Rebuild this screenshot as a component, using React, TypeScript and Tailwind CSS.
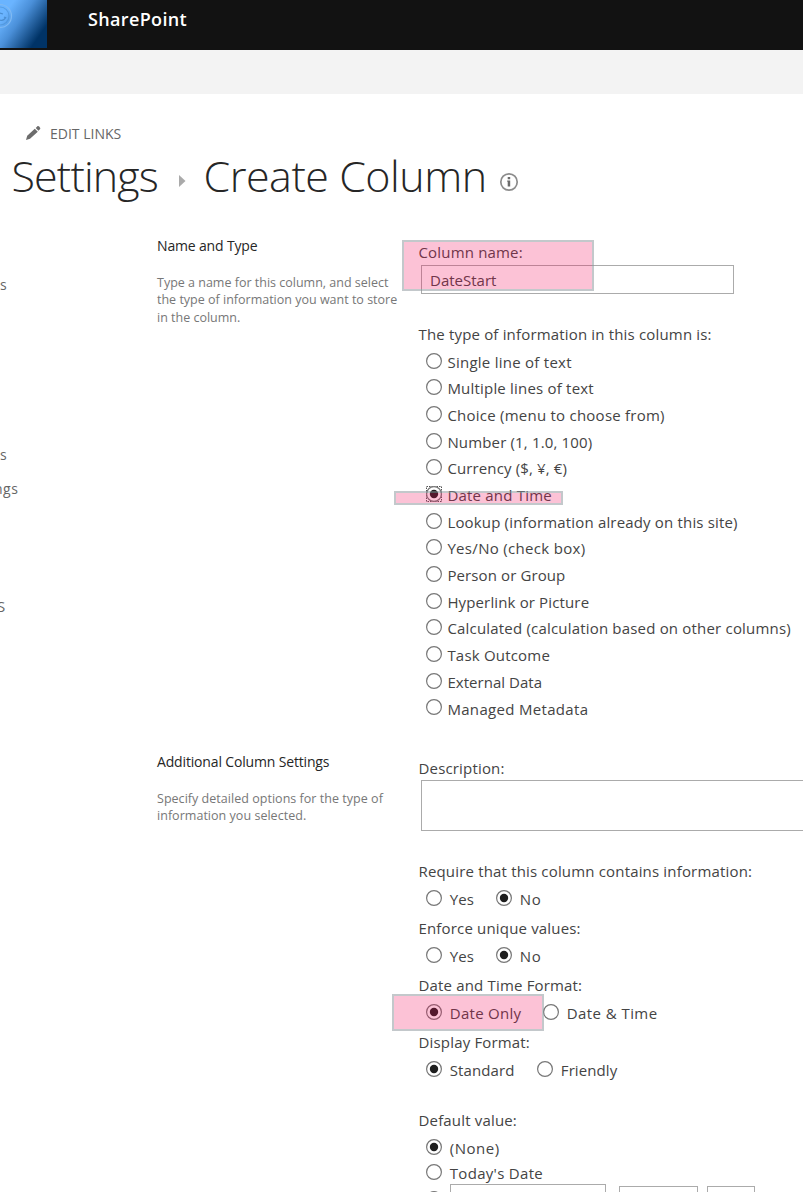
import React from "react";

function Radio({ checked = false, focused = false }: { checked?: boolean; focused?: boolean }) {
  return (
    <svg width="18" height="18" viewBox="0 0 18 18" className="shrink-0">
      {focused ? (
        <rect x="1.5" y="1.5" width="15" height="15" fill="none" stroke="#555" strokeDasharray="1.5 1" />
      ) : null}
      <circle cx="9" cy="9" r="7.4" fill="#fff" stroke="#777" strokeWidth="1.2" />
      {checked ? <circle cx="9" cy="9" r="4.2" fill="#1e1e1e" /> : null}
    </svg>
  );
}

const types = [
  { label: "Single line of text", cls: "tracking-[0.26px]" },
  { label: "Multiple lines of text", cls: "tracking-[0.2px]" },
  { label: "Choice (menu to choose from)", cls: "tracking-[0.24px]" },
  { label: "Number (1, 1.0, 100)", cls: "tracking-[0.16px]" },
  { label: "Currency ($, ¥, €)", cls: "tracking-[0.13px]" },
  { label: "Date and Time", cls: "tracking-[0.2px]" },
  { label: "Lookup (information already on this site)", cls: "tracking-[0.17px]" },
  { label: "Yes/No (check box)", cls: "tracking-[0.32px]" },
  { label: "Person or Group", cls: "tracking-[0.11px]" },
  { label: "Hyperlink or Picture", cls: "tracking-[0.14px]" },
  { label: "Calculated (calculation based on other columns)", cls: "tracking-[0.19px]" },
  { label: "Task Outcome", cls: "tracking-[0.2px]" },
  { label: "External Data", cls: "tracking-[0.04px]" },
  { label: "Managed Metadata", cls: "tracking-[0.32px]" },
];

function Label({ children, className = "" }: { children: React.ReactNode; className?: string }) {
  return <div className={`h-6 pl-[0.5px] leading-[22px] tracking-[0.17px] ${className}`}>{children}</div>;
}

function Choice({
  label,
  checked,
  className = "",
  text = "tracking-[0.1px]",
}: {
  label: string;
  checked?: boolean;
  className?: string;
  text?: string;
}) {
  return (
    <div className={`flex h-7 shrink-0 items-center ${className}`}>
      <Radio checked={checked} />
      <span className={`relative top-px ml-[6.8px] ${text}`}>{label}</span>
    </div>
  );
}

export default function App() {
  return (
    <div className="relative h-[1192px] w-[803px] overflow-hidden bg-white font-['Open_Sans','Noto_Sans',sans-serif] text-[15px] whitespace-nowrap text-[#444]">
      <header className="flex h-[50px] bg-[#121212]">
        <div className="h-12 w-[47px] overflow-hidden bg-[linear-gradient(125deg,#6ab4ff_18%,#4a8fd8_42%,#003366_80%)]">
          <svg width="47" height="48" fill="none" stroke="#4a8dd0" strokeWidth="1.2">
            <circle cx="0" cy="16" r="11.5" stroke="#7fb9f2" />
            <circle cx="0" cy="16" r="9" opacity="0.6" />
            <path d="M0 13l3 1M4 17l2 1M0 20c3 1 5-1 6-3" />
          </svg>
        </div>
        <div className="ml-[41px] h-10 text-[18px] leading-[38px] font-semibold tracking-[0.35px] text-white">SharePoint</div>
      </header>
      <div className="h-11 bg-[#f3f3f3]" />

      <div className="flex h-[58px] items-center pt-[21px] pl-[25px] text-[14px] text-[#666]">
        <svg width="16" height="16" viewBox="0 0 16 16" fill="#6c6c6c" className="-mt-0.5">
          <path d="M1 15l1.2-4.2 7.6-7.1 3 3L5 13.8zM10.7 2.9l1.5-1.4c.6-.6 1.4-.5 2 .1l.7.8c.6.6.5 1.3 0 1.9l-1.4 1.4z" />
        </svg>
        <span className="ml-[9px]">EDIT LINKS</span>
      </div>
      <h1 className="flex h-[78px] items-start pl-[11.5px] text-[43px] leading-[48px] font-light text-[#262626]">
        <span className="tracking-[-0.85px]">Settings</span>
        <svg width="8" height="14" viewBox="0 0 8 14" className="mt-[22px] ml-5">
          <path d="M1 1l6.5 6L1 13z" fill="#aaa" />
        </svg>
        <span className="ml-[17.5px] tracking-[-0.48px]">Create Column</span>
        <svg width="20" height="20" viewBox="0 0 20 20" className="mt-[19.5px] ml-[12.5px]">
          <circle cx="10" cy="10" r="8.2" fill="none" stroke="#8c8c8c" strokeWidth="1.7" />
          <path d="M8.7 5h2.5v2.2H8.7zM8.2 8.5h3v6H8.7V9.7h-.5z" fill="#6c6c6c" />
        </svg>
      </h1>

      <main className="flex items-start">
        <nav className="h-[962px] w-[157px] shrink-0 overflow-hidden pt-[43px] text-[14px] leading-6 text-[#666]">
          <div className="h-[170px]">s</div>
          <div className="h-[34px]">s</div>
          <div className="h-[117px]"><span className="-ml-[6px] tracking-[0.5px]">ngs</span></div>
          <div className="-ml-[3px] text-[15px]">S</div>
        </nav>
        <div className="w-[261px] shrink-0 text-[12.5px] leading-[17.3px] text-[#777]">
          <div className="h-[516px] pt-1">
            <h2 className="h-10 text-[14px] leading-6 font-normal tracking-[-0.16px] text-[#262626]">Name and Type</h2>
            <p>Type a name for this column, and select<br />the type of information you want to store<br />in the column.</p>
          </div>
          <div className="pt-1">
            <h2 className="h-10 text-[14px] leading-6 font-normal tracking-[-0.16px] text-[#262626]">Additional Column Settings</h2>
            <p className="tracking-[0.03px]">Specify detailed options for the type of<br />information you selected.</p>
          </div>
        </div>
        <form className="w-[500px] shrink-0 pt-[11px]">
          <Label>Column name:</Label>
          <div className="ml-[3px] h-[29px] w-[313px] border border-[#ababab] pl-2 leading-[29px]">DateStart</div>
          <Label className="mt-[29px]">The type of information in this column is:</Label>
          <div className="mt-[0.4px] ml-[7px] h-[409.6px]">
            {types.map((t, i) => (
              <div key={t.label} className="flex h-[26.68px] items-center">
                <Radio checked={i === 5} focused={i === 5} />
                <span className={`relative top-[1.3px] ml-[4.4px] ${t.cls}`}>{t.label}</span>
              </div>
            ))}
          </div>
          <Label className="h-[23px]">Description:</Label>
          <div className="ml-[3px] h-[51px] w-[480px] border border-[#ababab]" />
          <Label className="mt-[29px]">Require that this column contains information:</Label>
          <div className="flex h-[33px] pl-[7px]">
            <Choice label="Yes" className="w-[70px]" /><Choice label="No" checked text="tracking-[0.6px]" />
          </div>
          <Label>Enforce unique values:</Label>
          <div className="flex h-[33px] pl-[7px]">
            <Choice label="Yes" className="w-[70px]" /><Choice label="No" checked text="tracking-[0.6px]" />
          </div>
          <Label>Date and Time Format:</Label>
          <div className="flex h-[33px] pl-[7px]">
            <Choice label="Date Only" checked className="w-[117px]" text="tracking-[0.27px]" /><Choice label="Date & Time" text="tracking-[0.42px]" />
          </div>
          <Label>Display Format:</Label>
          <div className="flex h-[54px] pl-[7px]">
            <Choice label="Standard" checked className="w-[111px]" /><Choice label="Friendly" />
          </div>
          <Label>Default value:</Label>
          <div className="pl-[7px]">
            <Choice label="(None)" checked className="h-[26px] pt-[2px]" text="tracking-[0.5px]" />
            <Choice label="Today's Date" className="h-[26px]" text="tracking-[0.3px]" />
            <div className="-mt-px flex items-start">
              <div className="pt-1.5"><Radio /></div>
              <div className="ml-[7px] h-7 w-[156px] border border-[#ababab]" />
              <div className="mt-0.5 ml-[13px] h-7 w-[79px] border border-[#ababab]" />
              <div className="mt-0.5 ml-[9px] h-7 w-12 border border-[#ababab]" />
            </div>
          </div>
        </form>
      </main>

      <div className="absolute top-[240px] left-[402px] h-[51px] w-[192px] border-2 border-[rgba(135,145,152,0.5)] bg-[rgba(243,12,92,0.25)] bg-clip-padding" />
      <div className="absolute top-[491px] left-[394px] h-[14px] w-[169px] border-2 border-[rgba(135,145,152,0.5)] bg-[rgba(243,12,92,0.25)] bg-clip-padding" />
      <div className="absolute top-[994px] left-[392px] h-[37px] w-[152px] border-2 border-[rgba(135,145,152,0.5)] bg-[rgba(243,12,92,0.25)] bg-clip-padding" />
    </div>
  );
}
